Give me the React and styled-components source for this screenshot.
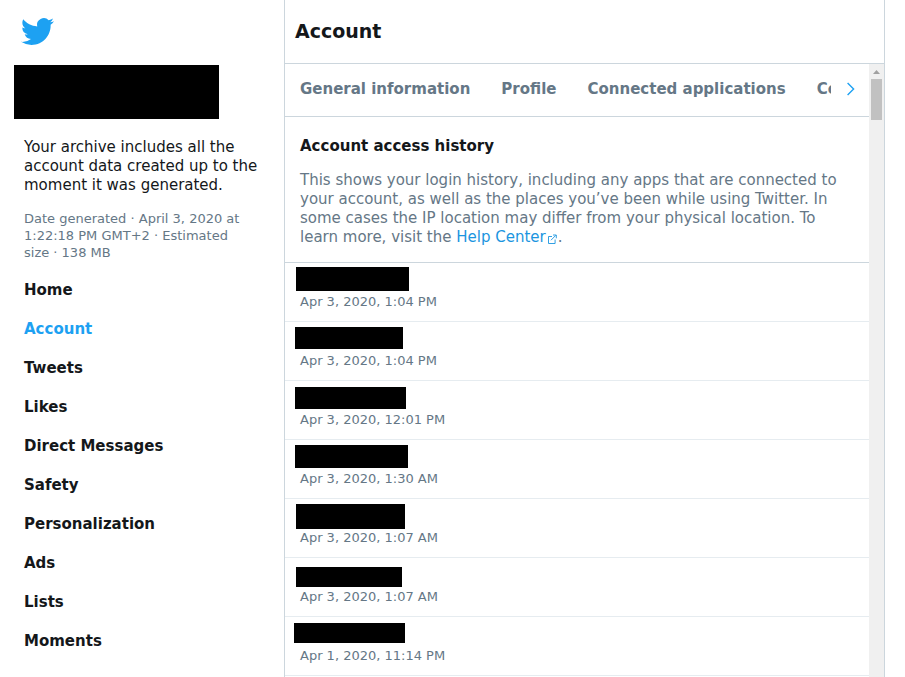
import React from "react";
import styled, { createGlobalStyle } from "styled-components";

const GlobalStyle = createGlobalStyle`
  *, *::before, *::after { box-sizing: border-box; }
  body {
    margin: 0;
    background: #fff;
    color: #14171a;
    font-family: "DejaVu Sans", sans-serif;
    font-size: 15px;
    line-height: 19px;
  }
  h1, h2, p, ul { margin: 0; padding: 0; }
  ul { list-style: none; }
`;

const Page = styled.div`
  display: grid;
  grid-template-columns: 284px minmax(0, 1fr);
  height: 100vh;
  padding-right: 20px;
  overflow: hidden;
`;

const Sidebar = styled.aside`
  padding: 15px 14px 0;
  overflow: hidden;
`;

const LogoLink = styled.a`
  display: block;
  width: 33px;
  height: 33px;
  margin-left: 7px;
  color: #1da1f2;
`;

const Profile = styled.div`
  width: 205px;
  height: 54px;
  margin: 17px 0 19px;
  background: #000;
`;

const Summary = styled.div`
  display: grid;
  gap: 15px;
  padding: 0 11px 0 10px;
`;

const Meta = styled.p`
  padding-right: 10px;
  color: #657786;
  font-size: 13px;
  line-height: 17px;
`;

const Nav = styled.nav`
  padding: 10px 10px 0;
`;

const NavLink = styled.a`
  display: block;
  padding: 10px 0;
  color: ${(p) => (p.$active ? "#1da1f2" : "#14171a")};
  font-weight: 700;
  text-decoration: none;
`;

const Main = styled.main`
  display: flex;
  flex-direction: column;
  min-height: 0;
  border: solid #ccd6dd;
  border-width: 0 1px;
`;

const Header = styled.header`
  display: flex;
  flex: none;
  align-items: center;
  height: 64px;
  padding: 0 10px;
  border-bottom: 1px solid #ccd6dd;
`;

const Title = styled.h1`
  font-size: 19px;
  line-height: 25px;
`;

const ScrollArea = styled.div`
  display: grid;
  grid-template-columns: minmax(0, 1fr) 15px;
  flex: 1;
  min-height: 0;
`;

const Content = styled.div`
  min-height: 0;
  overflow: hidden;
`;

const TabBar = styled.div`
  display: flex;
  align-items: center;
  height: 53px;
  padding: 0 8px 2px 15px;
  border-bottom: 1px solid #ccd6dd;
`;

const TabList = styled.div`
  display: flex;
  flex: 1;
  gap: 31px;
  min-width: 0;
  overflow: hidden;
`;

const Tab = styled.button`
  flex: none;
  padding: 0;
  border: 0;
  background: none;
  color: #657786;
  font: inherit;
  font-weight: 700;
  white-space: nowrap;
`;

const NextButton = styled.button`
  display: flex;
  flex: none;
  justify-content: center;
  width: 20px;
  margin-left: 10px;
  padding: 0;
  border: 0;
  background: none;
  color: #1da1f2;
`;

const Intro = styled.section`
  display: grid;
  gap: 15px;
  padding: 20px 15px 15px;
  border-bottom: 1px solid #ccd6dd;
`;

const SectionTitle = styled.h2`
  font-size: 15px;
  line-height: 19px;
`;

const Description = styled.p`
  color: #657786;
`;

const HelpLink = styled.a`
  color: #1b95e0;
  text-decoration: none;
  white-space: nowrap;

  svg {
    margin: 0 1px;
    vertical-align: -2px;
  }
`;

const Entry = styled.li`
  position: relative;
  padding: 30px 15px 11px;
  border-bottom: 1px solid #e6ecf0;
`;

const EntryDate = styled.time`
  display: block;
  color: #657786;
  font-size: 13px;
  line-height: 17px;
`;

const Redaction = styled.span`
  position: absolute;
  top: ${(p) => p.$top}px;
  left: ${(p) => p.$left}px;
  width: ${(p) => p.$width}px;
  height: ${(p) => p.$height}px;
  background: #000;
`;

const Scrollbar = styled.div`
  display: flex;
  flex-direction: column;
  align-items: center;
  background: #f0f0f0;
`;

const ScrollUp = styled.button`
  display: flex;
  align-items: center;
  justify-content: center;
  width: 15px;
  height: 15px;
  padding: 0;
  border: 0;
  background: none;
  color: #a0a0a0;
`;

const ScrollThumb = styled.div`
  width: 11px;
  height: 41px;
  background: #c1c1c1;
`;

const navItems = [
  "Home",
  "Account",
  "Tweets",
  "Likes",
  "Direct Messages",
  "Safety",
  "Personalization",
  "Ads",
  "Lists",
  "Moments",
];

const tabs = ["General information", "Profile", "Connected applications", "Contacts"];

const entries = [
  { date: "Apr 3, 2020, 1:04 PM", cover: [4, 11, 113, 24] },
  { date: "Apr 3, 2020, 1:04 PM", cover: [5, 10, 108, 22] },
  { date: "Apr 3, 2020, 12:01 PM", cover: [6, 10, 111, 22] },
  { date: "Apr 3, 2020, 1:30 AM", cover: [5, 10, 113, 23] },
  { date: "Apr 3, 2020, 1:07 AM", cover: [5, 11, 109, 25] },
  { date: "Apr 3, 2020, 1:07 AM", cover: [9, 11, 106, 20] },
  { date: "Apr 1, 2020, 11:14 PM", cover: [6, 9, 111, 20] },
];

function BirdIcon() {
  return (
    <svg width="33" height="33" viewBox="0 0 24 24" fill="currentColor" aria-hidden="true">
      <path d="M23.953 4.57a10 10 0 01-2.825.775 4.958 4.958 0 002.163-2.723c-.951.555-2.005.959-3.127 1.184a4.92 4.92 0 00-8.384 4.482C7.69 8.095 4.067 6.13 1.64 3.162a4.822 4.822 0 00-.666 2.475c0 1.71.87 3.213 2.188 4.096a4.904 4.904 0 01-2.228-.616v.06a4.923 4.923 0 003.946 4.827 4.996 4.996 0 01-2.212.085 4.936 4.936 0 004.604 3.417 9.867 9.867 0 01-6.102 2.105c-.39 0-.779-.023-1.17-.067a13.995 13.995 0 007.557 2.209c9.053 0 13.998-7.496 13.998-13.985 0-.21 0-.42-.015-.63A9.935 9.935 0 0024 4.59z" />
    </svg>
  );
}

function ChevronIcon() {
  return (
    <svg width="10" height="14" viewBox="0 0 10 14" fill="none" stroke="currentColor" strokeWidth="1.4" aria-hidden="true">
      <path d="M1.6 1l6 6-6 6" />
    </svg>
  );
}

function ExternalIcon() {
  return (
    <svg width="10" height="10" viewBox="0 0 10 10" fill="none" stroke="currentColor" strokeWidth="0.9" aria-hidden="true">
      <path d="M5 2.5H1.5v7h6.6V5.5M4 6.2L8.8 1.3M6 1h3.3v3.3" />
    </svg>
  );
}

export default function App() {
  return (
    <>
      <GlobalStyle />
      <Page>
        <Sidebar>
          <LogoLink href="#home" aria-label="Twitter">
            <BirdIcon />
          </LogoLink>
          <Profile />
          <Summary>
            <p>Your archive includes all the account data created up to the moment it was generated.</p>
            <Meta>Date generated · April 3, 2020 at 1:22:18 PM GMT+2 · Estimated size · 138 MB</Meta>
          </Summary>
          <Nav>
            {navItems.map((item) => (
              <NavLink key={item} href="#" $active={item === "Account"}>
                {item}
              </NavLink>
            ))}
          </Nav>
        </Sidebar>
        <Main>
          <Header>
            <Title>Account</Title>
          </Header>
          <ScrollArea>
            <Content>
              <TabBar>
                <TabList>
                  {tabs.map((tab) => (
                    <Tab key={tab} type="button">{tab}</Tab>
                  ))}
                </TabList>
                <NextButton type="button" aria-label="Next tabs">
                  <ChevronIcon />
                </NextButton>
              </TabBar>
              <Intro>
                <SectionTitle>Account access history</SectionTitle>
                <Description>
                  This shows your login history, including any apps that are connected to your account, as well as the
                  places you’ve been while using Twitter. In some cases the IP location may differ from your physical
                  location. To learn more, visit the{" "}
                  <HelpLink href="#help">Help Center<ExternalIcon /></HelpLink>.
                </Description>
              </Intro>
              <ul>
                {entries.map(({ date, cover: [top, left, width, height] }, i) => (
                  <Entry key={i}>
                    <Redaction $top={top} $left={left} $width={width} $height={height} />
                    <EntryDate>{date}</EntryDate>
                  </Entry>
                ))}
              </ul>
            </Content>
            <Scrollbar>
              <ScrollUp type="button" aria-label="Scroll up">
                <svg width="7" height="4" viewBox="0 0 7 4" fill="currentColor" aria-hidden="true">
                  <path d="M3.5 0L7 4H0z" />
                </svg>
              </ScrollUp>
              <ScrollThumb />
            </Scrollbar>
          </ScrollArea>
        </Main>
      </Page>
    </>
  );
}
